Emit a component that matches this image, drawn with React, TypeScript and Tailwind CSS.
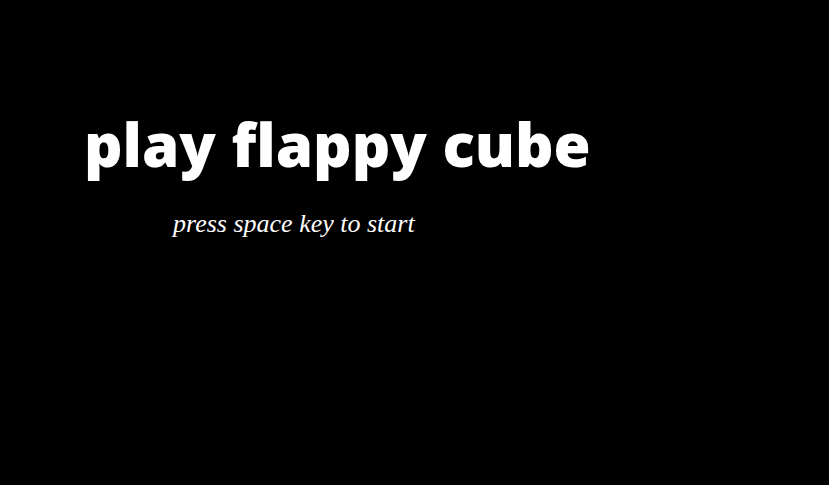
export default function App() {
  return (
    <div className="w-[829px] h-[485px] bg-black text-white overflow-hidden">
      <div className="pt-[106px] pl-[84px]">
        <h1 className="font-['Open_Sans',sans-serif] font-extrabold text-[60px] leading-[76px]">
          play flappy cube
        </h1>
        <p className="pl-[89px] mt-[26px] font-['Liberation_Serif',serif] italic text-[26px] leading-[32px]">
          press space key to start
        </p>
      </div>
    </div>
  );
}
